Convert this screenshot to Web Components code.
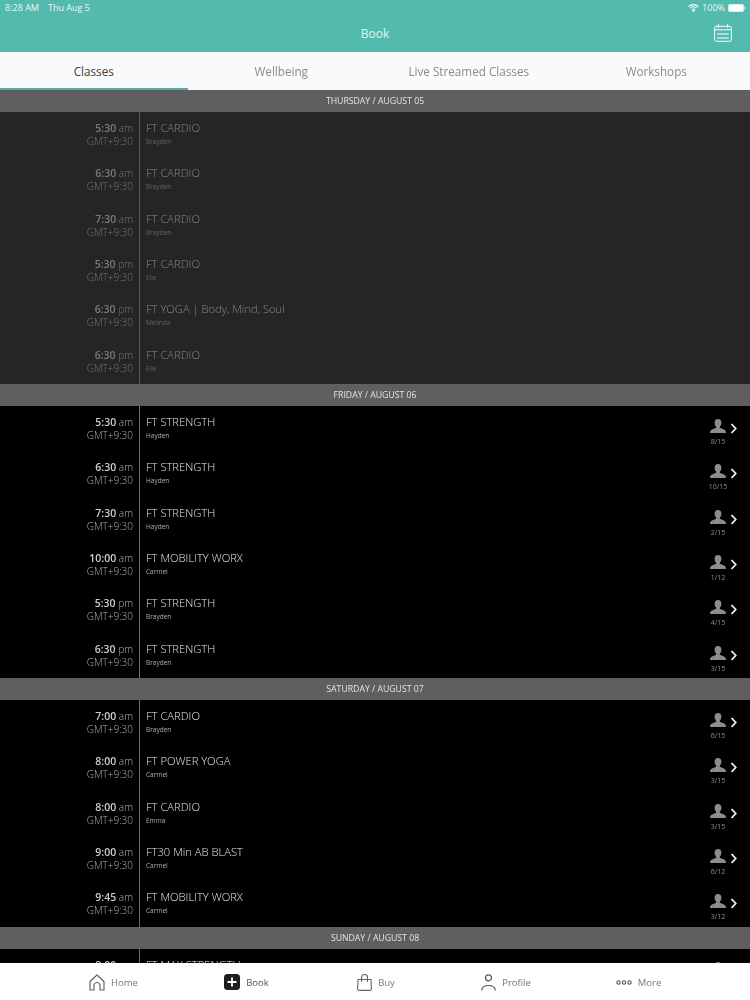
<!DOCTYPE html>
<html>
<head>
<meta charset="utf-8">
<title>Book</title>
<style>
  html, body { margin: 0; height: 100%; background: #000; }
  body { font-family: "Open Sans", sans-serif; }
</style>
</head>
<body>
<book-app>
  <app-header slot="header" title="Book"></app-header>
  <tab-strip slot="header" active="0" tabs="Classes|Wellbeing|Live Streamed Classes|Workshops"></tab-strip>

  <day-section label="THURSDAY / AUGUST 05" past>
    <class-row time="5:30" ap="am" name="FT CARDIO" coach="Brayden"></class-row>
    <class-row time="6:30" ap="am" name="FT CARDIO" coach="Brayden"></class-row>
    <class-row time="7:30" ap="am" name="FT CARDIO" coach="Brayden"></class-row>
    <class-row time="5:30" ap="pm" name="FT CARDIO" coach="Elle"></class-row>
    <class-row time="6:30" ap="pm" name="FT YOGA | Body, Mind, Soul" coach="Melinda"></class-row>
    <class-row time="6:30" ap="pm" name="FT CARDIO" coach="Elle"></class-row>
  </day-section>

  <day-section label="FRIDAY / AUGUST 06">
    <class-row time="5:30" ap="am" name="FT STRENGTH" coach="Hayden" count="8/15"></class-row>
    <class-row time="6:30" ap="am" name="FT STRENGTH" coach="Hayden" count="10/15"></class-row>
    <class-row time="7:30" ap="am" name="FT STRENGTH" coach="Hayden" count="2/15"></class-row>
    <class-row time="10:00" ap="am" name="FT MOBILITY WORX" coach="Carmel" count="1/12"></class-row>
    <class-row time="5:30" ap="pm" name="FT STRENGTH" coach="Brayden" count="4/15"></class-row>
    <class-row time="6:30" ap="pm" name="FT STRENGTH" coach="Brayden" count="3/15"></class-row>
  </day-section>

  <day-section label="SATURDAY / AUGUST 07">
    <class-row time="7:00" ap="am" name="FT CARDIO" coach="Brayden" count="6/15"></class-row>
    <class-row time="8:00" ap="am" name="FT POWER YOGA" coach="Carmel" count="3/15"></class-row>
    <class-row time="8:00" ap="am" name="FT CARDIO" coach="Emma" count="3/15"></class-row>
    <class-row time="9:00" ap="am" name="FT30 Min AB BLAST" coach="Carmel" count="6/12"></class-row>
    <class-row time="9:45" ap="am" name="FT MOBILITY WORX" coach="Carmel" count="3/12"></class-row>
  </day-section>

  <day-section label="SUNDAY / AUGUST 08">
    <!-- cut off by the tab bar: only the first line shows -->
    <class-row time="8:00" ap="am" name="FT MAX STRENGTH" cut></class-row>
  </day-section>

  <bottom-tabs slot="footer"></bottom-tabs>
</book-app>

<script>
window.customElements.define('book-app', class BookApp extends HTMLElement {
  constructor() {
    super()
    this.attachShadow({ mode: 'open' })
    this.shadowRoot.innerHTML = `
      <style>
        :host { display: flex; flex-direction: column; height: 1000px; overflow: hidden; background: #000; }
        .list { flex: 1; min-height: 0; overflow: hidden; }
      </style>
      <slot name="header"></slot>
      <div class="list"><slot></slot></div>
      <slot name="footer"></slot>`
  }
})

window.customElements.define('app-header', class AppHeader extends HTMLElement {
  constructor() {
    super()
    this.attachShadow({ mode: 'open' })
  }

  connectedCallback() {
    this.shadowRoot.innerHTML = `
      <style>
        :host { display: block; height: 52px; background: #52bbae; color: #fff; }
        .status { display: flex; justify-content: space-between; align-items: center; height: 15px; padding: 0 4px 0 5px; font: 500 9px/15px "Open Sans", sans-serif; color: #e6f6f3; }
        .status div { display: flex; align-items: center; }
        .date { margin-left: 9px; }
        .wifi { margin-right: 3px; }
        .batt { margin-left: 3px; }
        .nav { display: flex; align-items: center; justify-content: center; height: 37px; position: relative; }
        .title { font: 400 12px "Open Sans", sans-serif; color: #e2f5f2; margin-top: -1px; }
        .cal { position: absolute; right: 18px; top: 9px; }
      </style>
      <div class="status">
        <div><span>8:28 AM</span><span class="date">Thu Aug 5</span></div>
        <div>
          <svg class="wifi" width="11" height="8" viewBox="0 0 11 8"><path d="M.6 2.600a7 7 0 0 1 9.800 0M2.200 4.200a4.700 4.700 0 0 1 6.600 0M3.800 5.800a2.300 2.300 0 0 1 3.400 0" fill="none" stroke="#fff" stroke-width="1.100"/><circle cx="5.500" cy="7" r="1" fill="#fff"/></svg>
          <span>100%</span>
          <svg class="batt" width="18" height="8" viewBox="0 0 18 8"><rect x=".3" y=".3" width="15.400" height="7.400" rx="1.800" fill="#fff" stroke="#cfeee9" stroke-width=".6"/><rect x="16.300" y="2.600" width="1" height="2.800" rx=".5" fill="#cfeee9"/></svg>
        </div>
      </div>
      <div class="nav">
        <span class="title">${this.getAttribute('title')}</span>
        <svg class="cal" width="18" height="18" viewBox="0 0 18 18" fill="none" stroke="#fff" stroke-width="1" stroke-linecap="round">
          <rect x=".6" y="2.300" width="16.800" height="15" rx="2"/>
          <path d="M4.500.6v2.800M13.500.6v2.800M.6 5.800h16.800M3.500 10h11M3.500 14h11"/>
        </svg>
      </div>`
  }
})

window.customElements.define('tab-strip', class TabStrip extends HTMLElement {
  constructor() {
    super()
    this.attachShadow({ mode: 'open' })
  }

  connectedCallback() {
    const active = Number(this.getAttribute('active'))
    const tabs = this.getAttribute('tabs').split('|')
    this.shadowRoot.innerHTML = `
      <style>
        :host { display: grid; grid-template-columns: repeat(4, 1fr); height: 38px; background: #f9fafb; }
        .tab { display: flex; align-items: center; justify-content: center; border-top: 1px solid transparent; border-bottom: 2.500px solid transparent; font: 400 11.700px "Open Sans", sans-serif; color: #8b8b8d; filter: grayscale(1); }
        .on { color: #3d3d3f; border-bottom-color: #57ada3; filter: none; }
      </style>
      ${tabs.map((t, i) => `<div class="tab${i === active ? ' on' : ''}">${t}</div>`).join('')}`
  }
})

window.customElements.define('day-section', class DaySection extends HTMLElement {
  constructor() {
    super()
    this.attachShadow({ mode: 'open' })
  }

  connectedCallback() {
    this.shadowRoot.innerHTML = `
      <style>
        :host { display: block; --row-bg: #000; --hour: #cdcdcd; --ampm: #b0b0b0; --zone: #acacac; --name: #e6e6e6; --coach: #b0b0b0; --line: #6a6a6a; }
        :host([past]) { --row-bg: #252527; --hour: #7a7a7a; --ampm: #747474; --zone: #727272; --name: #858585; --coach: #626262; --line: #5a5a5a; }
        .head { display: flex; align-items: center; justify-content: center; height: 22px; background: #5f5f5f; font: 400 8.700px "Open Sans", sans-serif; color: #e4e4e4; filter: grayscale(1); }
      </style>
      <div class="head">${this.getAttribute('label')}</div>
      <slot></slot>`
  }
})

window.customElements.define('class-row', class ClassRow extends HTMLElement {
  constructor() {
    super()
    this.attachShadow({ mode: 'open' })
  }

  connectedCallback() {
    const count = this.getAttribute('count')
    const cut = this.hasAttribute('cut')
    const person = '<svg width="16" height="14" viewBox="0 0 16 14"><path d="M8 0c2.200 0 3.400 1.600 3.400 3.700 0 1.500-.6 3-1.400 3.800-.4.500-.3 1.200.3 1.500 1.700.8 3.900 1.300 4.900 2.300.5.600.8 1.500.8 2.700H0c0-1.200.3-2.100.8-2.700 1-1 3.200-1.500 4.900-2.300.6-.3.7-1 .3-1.500-.8-.8-1.400-2.300-1.400-3.800C4.600 1.600 5.800 0 8 0z" fill="#8d8d8d"/></svg>'
    const side = count || cut ? `
      <div class="side">
        <div class="spot">
          ${person}
          ${count ? `<span>${count}</span>` : ''}
        </div>
        <svg class="chev" width="8" height="11" viewBox="0 0 8 11"><path d="M1.500 1l4.200 4.500-4.200 4.500" fill="none" stroke="#f2f2f2" stroke-width="1.800"/></svg>
      </div>` : ''
    this.shadowRoot.innerHTML = `
      <style>
        :host { display: flex; height: 45.330px; background: var(--row-bg); }
        .when { width: 133px; padding: 9px 6px 0 0; border-right: 1px solid var(--line); text-align: right; white-space: nowrap; font: 300 10px/14px "Open Sans", sans-serif; }
        .when > div, .what > div, .spot span { filter: grayscale(1); }
        .hour { font: 600 10.500px/14px "Open Sans", sans-serif; color: var(--hour); }
        .ampm { font: 300 10px/14px "Open Sans", sans-serif; color: var(--ampm); }
        .zone { font: 300 10px/13px "Open Sans", sans-serif; color: var(--zone); }
        .what { flex: 1; padding: 9px 0 0 6px; white-space: nowrap; }
        .name { font: 300 11.200px/14px "Open Sans", sans-serif; color: var(--name); }
        .coach { font: 400 6.500px/13px "Open Sans", sans-serif; color: var(--coach); }
        .side { display: flex; align-items: flex-start; padding: 13px 12px 0 0; }
        .spot { display: flex; flex-direction: column; align-items: center; width: 20px; }
        .spot span { font: 400 7px/9px "Open Sans", sans-serif; color: #8f8f8f; margin-top: 4px; }
        .chev { margin: 4px 0 0 2px; }
      </style>
      <div class="when">
        <div><span class="hour">${this.getAttribute('time')}</span> <span class="ampm">${this.getAttribute('ap')}</span></div>
        ${cut ? '' : '<div class="zone">GMT+9:30</div>'}
      </div>
      <div class="what">
        <div class="name">${this.getAttribute('name')}</div>
        ${cut ? '' : `<div class="coach">${this.getAttribute('coach')}</div>`}
      </div>
      ${side}`
  }
})

window.customElements.define('bottom-tabs', class BottomTabs extends HTMLElement {
  constructor() {
    super()
    this.attachShadow({ mode: 'open' })
    this.shadowRoot.innerHTML = `
      <style>
        :host { display: grid; grid-template-columns: 131px 135px 124px 136px 129px; padding-left: 48px; flex: none; height: 37px; background: #fff; }
        .item { display: flex; align-items: center; justify-content: center; gap: 6px; padding-top: 1px; font: 400 9.500px "Open Sans", sans-serif; color: #777; }
        .on { color: #555; }
        span { filter: grayscale(1); }
        svg { display: block; }
      </style>
      <div class="item">
        <svg width="16" height="17" viewBox="0 0 16 17" fill="none" stroke="#666" stroke-width="1.200" stroke-linejoin="round"><path d="M1 7.500L8 1l7 6.500V16h-4v-4.500a3 3 0 0 0-6 0V16H1z"/></svg>
        <span>Home</span>
      </div>
      <div class="item on">
        <svg width="16" height="16" viewBox="0 0 16 16"><rect width="16" height="16" rx="3.500" fill="#1d1d1f"/><path d="M8 3.500v9M3.500 8h9" stroke="#fff" stroke-width="1.800"/></svg>
        <span>Book</span>
      </div>
      <div class="item">
        <svg width="15" height="17" viewBox="0 0 15 17" fill="none" stroke="#666" stroke-width="1.100"><path d="M1 5.500h13l.4 9.500a1.500 1.500 0 0 1-1.500 1.400H2.100A1.500 1.500 0 0 1 .6 15z"/><path d="M4.500 8V3.500a3 3 0 0 1 6 0V8"/></svg>
        <span>Buy</span>
      </div>
      <div class="item">
        <svg width="15" height="17" viewBox="0 0 15 17" fill="none" stroke="#555" stroke-width="1.200"><circle cx="7.500" cy="3.800" r="3"/><path d="M.6 16.500c.4-3.500 3.200-5 6.900-5s6.500 1.500 6.900 5"/></svg>
        <span>Profile</span>
      </div>
      <div class="item">
        <svg width="16" height="5" viewBox="0 0 16 5" fill="none" stroke="#555" stroke-width="1.100"><circle cx="2.500" cy="2.500" r="1.700"/><circle cx="8" cy="2.500" r="1.700"/><circle cx="13.500" cy="2.500" r="1.700"/></svg>
        <span>More</span>
      </div>`
  }
})
</script>
</body>
</html>
